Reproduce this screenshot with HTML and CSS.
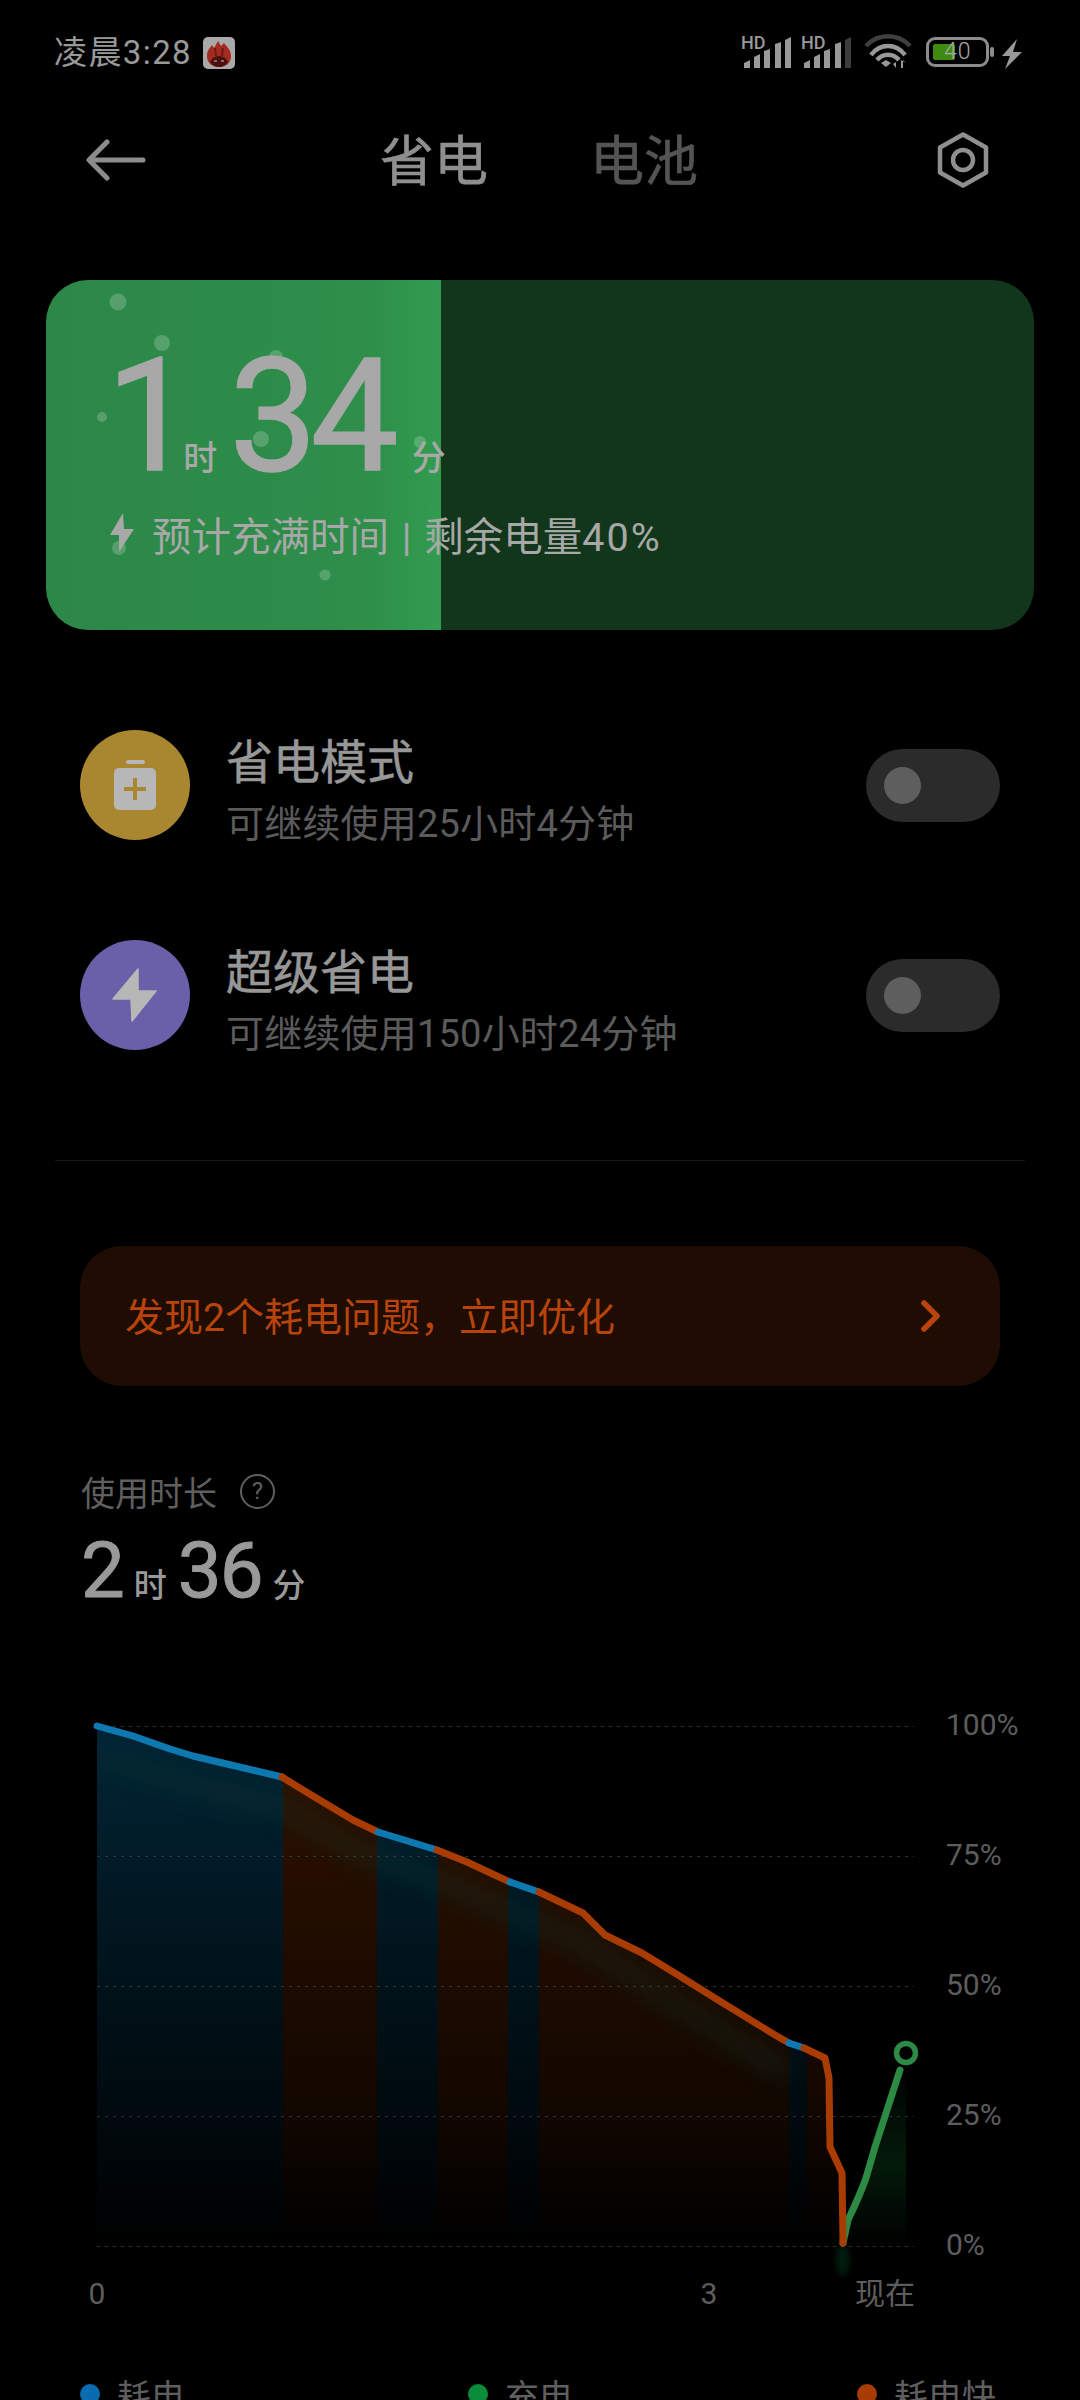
FILE: index.html
```html
<!DOCTYPE html>
<html lang="zh-CN">
<head>
    <meta charset="UTF-8">
    <meta name="viewport" content="width=device-width, initial-scale=1.0">
    <title>省电</title>
    <link rel="stylesheet" href="styles.css">
</head>
<body>
    <div class="status-bar">
        <div class="status-left">
            <span class="status-time">凌晨3:28</span>
            <svg class="app-badge" width="32" height="32" viewBox="0 0 32 32">
                <rect width="32" height="32" rx="5" fill="#a9a9a9"/>
                <path d="M4 19 C4 13 7 11 9 8 L11 11 L15 4 L18 9 L21 6 C24 10 28 13 28 19 C28 26 23 30 16 30 C9 30 4 26 4 19Z" fill="#a52a21"/>
                <path d="M7 25 C9 21 12 19 16 19 C20 19 23 21 25 25 C23 28 20 30 16 30 C12 30 9 28 7 25Z" fill="#4b100d"/>
                <path d="M12 11 L13 19 M20 11 L19 19" stroke="#6e1a14" stroke-width="2"/>
                <path d="M11 24 H14 M18 24 H21" stroke="#c9c9c9" stroke-width="1.2"/>
            </svg>
        </div>
        <div class="status-right">
            <div class="signal">
                <span class="signal-hd">HD</span>
                <svg width="50" height="32" viewBox="0 0 50 32">
                    <path d="M1 26 L7 23 V31 H1Z M11 20 L17 17 V31 H11Z M21 14 L27 12 V31 H21Z M32 7 L38 5 V31 H32Z M42 3 L48 0 V31 H42Z" fill="#999"/>
                </svg>
            </div>
            <div class="signal">
                <span class="signal-hd">HD</span>
                <svg width="50" height="32" viewBox="0 0 50 32">
                    <path d="M1 26 L7 23 V31 H1Z M11 20 L17 17 V31 H11Z M21 14 L27 12 V31 H21Z M32 7 L38 5 V31 H32Z" fill="#999"/>
                    <path d="M42 3 L48 0 V31 H42Z" fill="#3c3c3c"/>
                </svg>
            </div>
            <svg class="wifi" width="48" height="34" viewBox="0 0 48 34">
                <path d="M2 12 C14 -1 34 -1 46 12" fill="none" stroke="#3f3f3f" stroke-width="4.5"/>
                <path d="M7 21 C16 9 32 9 41 21" fill="none" stroke="#999" stroke-width="4.5"/>
                <path d="M13 26 C19 19 29 19 35 26" fill="none" stroke="#999" stroke-width="4.5"/>
                <path d="M17 29 L22 26 L27 29 L22 33Z" fill="#999"/>
                <path d="M32 34 V28 L29 30 Z M39 26 V34 H37 V26 L42 29 Z" fill="#999"/>
            </svg>
            <div class="battery">
                <div class="battery-body">
                    <div class="battery-level"></div>
                    <span class="battery-text">40</span>
                </div>
                <div class="battery-nub"></div>
            </div>
            <svg class="bolt-small" width="20" height="30" viewBox="0 0 20 30">
                <path d="M15 0 L0 17 H8 L3 30 L20 13 H11Z" fill="#999"/>
            </svg>
        </div>
    </div>

    <div class="nav">
        <svg class="nav-back" width="60" height="42" viewBox="0 0 60 42">
            <path d="M57 21 H4 M21 3 L3 21 L21 39" fill="none" stroke="#8c8c8c" stroke-width="5" stroke-linecap="round" stroke-linejoin="round"/>
        </svg>
        <div class="nav-tabs">
            <span class="nav-tab active">省电</span>
            <span class="nav-tab">电池</span>
        </div>
        <svg class="nav-settings" width="52" height="56" viewBox="0 0 52 56">
            <path d="M26 2.5 L49 15.5 V40.5 L26 53.5 L3 40.5 V15.5Z" fill="none" stroke="#8f8f8f" stroke-width="4.5" stroke-linejoin="round"/>
            <circle cx="26" cy="28" r="10" fill="none" stroke="#8f8f8f" stroke-width="4.5"/>
        </svg>
    </div>

    <div class="charge-card">
        <svg class="charge-bubbles" width="988" height="350" viewBox="46 280 988 350">
            <circle cx="118" cy="302" r="8.5"/>
            <circle cx="162" cy="343" r="8"/>
            <circle cx="102" cy="417" r="5"/>
            <circle cx="276" cy="357" r="7"/>
            <circle cx="261" cy="439" r="8"/>
            <circle cx="420" cy="442" r="6"/>
            <circle cx="119" cy="548" r="7"/>
            <circle cx="325" cy="575" r="5.5"/>
        </svg>
        <div class="charge-time">
            <span class="charge-num charge-num-one">1</span>
            <span class="charge-unit">时</span>
            <span class="charge-num">34</span>
            <span class="charge-unit">分</span>
        </div>
        <div class="charge-info">
            <svg width="26" height="40" viewBox="0 0 26 40">
                <path d="M13 0 L0 22 H9 L9 39 L24 16 H14Z" fill="#a8a8a8"/>
            </svg>
            <span>预计充满时间 | 剩余电量<span class="charge-percent">40%</span></span>
        </div>
    </div>

    <div class="mode-row">
        <div class="mode-icon mode-icon-saver">
            <svg width="110" height="110" viewBox="0 0 110 110">
                <rect x="46" y="30" width="19" height="4" rx="2" fill="#b7b7b7"/>
                <rect x="34" y="38" width="42" height="42" rx="5" fill="#b7b7b7"/>
                <path d="M44 59 H66 M55 48 V70" stroke="#a98630" stroke-width="4"/>
            </svg>
        </div>
        <div class="mode-text">
            <div class="mode-title">省电模式</div>
            <div class="mode-desc">可继续使用25小时4分钟</div>
        </div>
        <div class="toggle"><div class="toggle-knob"></div></div>
    </div>

    <div class="mode-row">
        <div class="mode-icon mode-icon-super">
            <svg width="110" height="110" viewBox="0 0 110 110">
                <path d="M58 29 L33 59 H51 L52 81 L76 51 H58Z" fill="#b7b7b7" stroke="#b7b7b7" stroke-width="1.5" stroke-linejoin="round"/>
            </svg>
        </div>
        <div class="mode-text">
            <div class="mode-title">超级省电</div>
            <div class="mode-desc">可继续使用150小时24分钟</div>
        </div>
        <div class="toggle"><div class="toggle-knob"></div></div>
    </div>

    <div class="divider"></div>

    <div class="alert-banner">
        <span>发现2个耗电问题，立即优化</span>
        <svg class="alert-arrow" width="22" height="32" viewBox="0 0 22 32">
            <path d="M4 3 L17 16 L4 29" fill="none" stroke="#b8440c" stroke-width="5.5" stroke-linecap="round" stroke-linejoin="round"/>
        </svg>
    </div>

    <div class="usage-head">
        <span>使用时长</span>
        <span class="help-icon">?</span>
    </div>
    <div class="usage-total">
        <span class="usage-num">2</span>
        <span class="usage-unit">时</span>
        <span class="usage-num">36</span>
        <span class="usage-unit">分</span>
    </div>

    <svg class="chart" width="1080" height="670" viewBox="0 1680 1080 670">
        <defs>
            <linearGradient id="fade-blue" gradientUnits="userSpaceOnUse" x1="0" y1="1726" x2="0" y2="2240">
                <stop offset="0" stop-color="#022536"/>
                <stop offset="0.5" stop-color="#01121a"/>
                <stop offset="0.75" stop-color="#000a0f"/>
                <stop offset="1" stop-color="#000"/>
            </linearGradient>
            <linearGradient id="fade-orange" gradientUnits="userSpaceOnUse" x1="0" y1="1726" x2="0" y2="2240">
                <stop offset="0" stop-color="#301200"/>
                <stop offset="0.5" stop-color="#1d0b00"/>
                <stop offset="0.75" stop-color="#120700"/>
                <stop offset="1" stop-color="#000"/>
            </linearGradient>
            <linearGradient id="fade-green" gradientUnits="userSpaceOnUse" x1="0" y1="2060" x2="0" y2="2246">
                <stop offset="0" stop-color="#000"/>
                <stop offset="0.55" stop-color="#031a0a"/>
                <stop offset="1" stop-color="#000"/>
            </linearGradient>
            <clipPath id="under-line">
                <path d="M97 1726 L133 1736 L170 1749 L193 1756 L282 1777 L303 1790 L353 1820 L378 1832 L437 1850 L467 1862 L510 1882 L539 1892 L583 1913 L605 1935 L642 1953 L678 1975 L718 2000 L775 2035 L789 2043 L804 2048 L825 2058 L829 2078 L830 2147 L842 2173 L843 2260 L97 2260Z"/>
            </clipPath>
            <filter id="haze" x="-10%" y="-30%" width="120%" height="160%">
                <feGaussianBlur stdDeviation="11"/>
            </filter>
            <filter id="soft" x="-100%" y="-50%" width="300%" height="200%">
                <feGaussianBlur stdDeviation="3"/>
            </filter>
        </defs>

        <g clip-path="url(#under-line)">
            <rect x="97" y="1720" width="186" height="530" fill="url(#fade-blue)"/>
            <rect x="283" y="1720" width="94" height="530" fill="url(#fade-orange)"/>
            <rect x="377" y="1720" width="61" height="530" fill="url(#fade-blue)"/>
            <rect x="438" y="1720" width="70" height="530" fill="url(#fade-orange)"/>
            <rect x="508" y="1720" width="31" height="530" fill="url(#fade-blue)"/>
            <rect x="539" y="1720" width="250" height="530" fill="url(#fade-orange)"/>
            <rect x="789" y="1720" width="18" height="530" fill="url(#fade-blue)"/>
            <rect x="807" y="1720" width="36" height="530" fill="url(#fade-orange)"/>
            <path d="M97 1756 L193 1786 L282 1807 L353 1850 L437 1880 L510 1912 L583 1943 L642 1983 L718 2030 L789 2073" fill="none" stroke="#0c3a30" stroke-width="22" opacity="0.3" filter="url(#haze)"/>
        </g>
        <path d="M846 2240 L848 2220 L866 2178 L875 2147 L902 2063 L906 2063 V2246 L846 2246Z" fill="url(#fade-green)"/>
        <ellipse cx="843" cy="2260" rx="7" ry="16" fill="#031a0a" filter="url(#soft)"/>

        <g class="chart-grid">
            <line x1="97" y1="1726.5" x2="914" y2="1726.5"/>
            <line x1="97" y1="1856.5" x2="914" y2="1856.5"/>
            <line x1="97" y1="1986.5" x2="914" y2="1986.5"/>
            <line x1="97" y1="2116.5" x2="914" y2="2116.5"/>
            <line x1="97" y1="2246.5" x2="914" y2="2246.5"/>
        </g>

        <g class="chart-line">
            <path stroke="#0e78b0" d="M97 1726 L133 1736 L170 1749 L193 1756 L282 1777"/>
            <path stroke="#a83c02" d="M282 1777 L303 1790 L353 1820 L378 1832"/>
            <path stroke="#0e78b0" d="M378 1832 L437 1850"/>
            <path stroke="#a83c02" d="M437 1850 L467 1862 L510 1882"/>
            <path stroke="#0e78b0" d="M510 1882 L539 1892"/>
            <path stroke="#a83c02" d="M539 1892 L583 1913 L605 1935 L642 1953 L678 1975 L718 2000 L775 2035 L789 2043"/>
            <path stroke="#0e78b0" d="M789 2043 L804 2048"/>
            <path stroke="#2c8a45" d="M843 2243 L848 2220 Q860 2195 866 2178 L875 2147 L900 2070"/>
            <path stroke="#a83c02" d="M804 2048 L825 2058 L829 2078 L830 2147 L842 2173 L843 2243"/>
        </g>
        <circle cx="906" cy="2053" r="9.5" fill="#000" stroke="#2c8a45" stroke-width="5.5"/>

        <g class="chart-label">
            <text x="946" y="1735">100%</text>
            <text x="946" y="1865">75%</text>
            <text x="946" y="1995">50%</text>
            <text x="946" y="2125">25%</text>
            <text x="946" y="2255">0%</text>
            <text x="97" y="2304" text-anchor="middle">0</text>
            <text x="709" y="2304" text-anchor="middle">3</text>
            <text x="855" y="2304">现在</text>
        </g>
    </svg>

    <div class="legend">
        <div class="legend-item"><span class="legend-dot dot-blue"></span>耗电</div>
        <div class="legend-item"><span class="legend-dot dot-green"></span>充电</div>
        <div class="legend-item"><span class="legend-dot dot-orange"></span>耗电快</div>
    </div>
</body>
</html>
```

FILE: styles.css
```css
* {
    box-sizing: border-box;
}

html, body {
    margin: 0;
    padding: 0;
}

body {
    width: 1080px;
    height: 2400px;
    overflow: hidden;
    background: #000;
    color: #979797;
    font-family: Roboto, "Noto Sans CJK SC", sans-serif;
}

svg {
    display: block;
    flex-shrink: 0;
}

/* status bar */
.status-bar {
    height: 104px;
    padding: 34px 58px 0 54px;
    display: flex;
    justify-content: space-between;
    align-items: flex-start;
}

.status-left {
    display: flex;
    align-items: center;
    gap: 11px;
}

.status-time {
    font-size: 33px;
    line-height: 38px;
    letter-spacing: 1.4px;
    color: #999;
}

.status-right {
    display: flex;
    align-items: flex-start;
}

.signal {
    position: relative;
    width: 50px;
    height: 34px;
    margin-right: 10px;
    margin-left: 0;
}

.signal svg {
    position: absolute;
    left: 2px;
    top: 3px;
}

.signal-hd {
    position: absolute;
    left: 0;
    top: 1px;
    font-size: 18px;
    line-height: 15px;
    font-weight: 500;
    color: #999;
    background: #000;
    z-index: 1;
}

.wifi {
    margin: 0 14px 0 3px;
}

.battery {
    display: flex;
    align-items: center;
    margin-right: 8px;
    margin-top: 3px;
}

.battery-body {
    position: relative;
    width: 63px;
    height: 30px;
    border: 3px solid #8c8c8c;
    border-radius: 9px;
}

.battery-level {
    width: 22px;
    height: 16px;
    margin: 4px 0 0 4px;
    background: #3f8a10;
    border-radius: 2px;
}

.battery-text {
    position: absolute;
    left: 15px;
    top: -1px;
    font-size: 23px;
    line-height: 26px;
    font-weight: 300;
    color: #aaa;
    letter-spacing: 1px;
}

.battery-nub {
    width: 4px;
    height: 10px;
    margin-left: 1px;
    background: #8c8c8c;
    border-radius: 2px;
}

.bolt-small {
    margin-top: 5px;
}

/* nav */
.nav {
    position: relative;
    height: 112px;
    padding: 0 91px 0 86px;
    display: flex;
    align-items: center;
    justify-content: space-between;
}

.nav-tabs {
    display: flex;
    gap: 102px;
    padding-top: 5px;
    margin-left: 234px;
    margin-right: auto;
}

.nav-tab {
    font-size: 54px;
    line-height: 60px;
    -webkit-text-stroke: 0.6px;
    color: #545454;
}

.nav-tab.active {
    color: #8f8f8f;
}

/* charge card */
.charge-card {
    position: relative;
    width: 988px;
    height: 350px;
    margin: 64px 46px 0;
    padding: 58px 0 0 60px;
    border-radius: 42px;
    overflow: hidden;
    background: linear-gradient(90deg, #2c8748 0, #2e8e4a 320px, #319c4f 395px, #12361b 395px);
}

.charge-bubbles {
    position: absolute;
    left: 0;
    top: 0;
}

.charge-bubbles circle {
    fill: rgba(255, 255, 255, 0.2);
}

.charge-time {
    position: relative;
    display: flex;
    align-items: baseline;
    height: 157px;
    color: #a8a8a8;
}

.charge-num {
    font-size: 157px;
    line-height: 157px;
    -webkit-text-stroke: 1.5px;
    letter-spacing: -7px;
}

.charge-num-one {
    margin-right: -24px;
}

.charge-unit {
    font-size: 34px;
    font-weight: 500;
    margin: 0 12px 0 20px;
}

.charge-info {
    position: relative;
    display: flex;
    align-items: center;
    gap: 16px;
    margin: 13px 0 0 4px;
    height: 50px;
    font-size: 39.5px;
    word-spacing: 3px;
    color: #a8a8a8;
}

.charge-percent {
    letter-spacing: 2px;
}

/* mode rows */
.mode-row {
    display: flex;
    align-items: center;
    height: 110px;
    margin: 100px 80px 0;
}

.mode-icon {
    width: 110px;
    height: 110px;
    border-radius: 50%;
}

.mode-icon-saver {
    background: #a98630;
}

.mode-icon-super {
    background: #6a60a9;
}

.mode-text {
    flex: 1;
    margin-left: 36px;
    padding-top: 11px;
}

.mode-title {
    font-size: 47px;
    line-height: 62px;
    -webkit-text-stroke: 0.5px;
    margin-bottom: 5px;
    color: #979797;
}

.mode-desc {
    font-size: 38px;
    line-height: 50px;
    letter-spacing: 0.2px;
    color: #5b5b5b;
}

.toggle {
    width: 134px;
    height: 73px;
    padding: 18px;
    border-radius: 37px;
    background: #2b2b2b;
}

.toggle-knob {
    width: 37px;
    height: 37px;
    border-radius: 50%;
    background: #5e5e5e;
}

.divider {
    height: 1px;
    margin: 110px 55px 0;
    background: #161616;
}

/* banner */
.alert-banner {
    display: flex;
    align-items: center;
    justify-content: space-between;
    height: 140px;
    margin: 85px 80px 0;
    padding: 0 58px 4px 45px;
    border-radius: 42px;
    background: #1f0d03;
    font-size: 39px;
    color: #b8440c;
}

.alert-arrow {
    margin-top: 4px;
}

/* usage summary */
.usage-head {
    display: flex;
    align-items: center;
    gap: 23px;
    height: 44px;
    margin: 83px 0 0 81px;
    font-size: 34px;
    color: #5f5f5f;
}

.help-icon {
    width: 35px;
    height: 35px;
    border: 2px solid #5f5f5f;
    border-radius: 50%;
    font-size: 24px;
    line-height: 30px;
    text-align: center;
}

.usage-total {
    display: flex;
    align-items: baseline;
    height: 78px;
    margin: 19px 0 0 81px;
    color: #999;
}

.usage-num {
    font-size: 78px;
    line-height: 78px;
    -webkit-text-stroke: 1px;
    letter-spacing: -2px;
}

.usage-unit {
    font-size: 33px;
    font-weight: 500;
    margin: 0 11px 0 11px;
}

/* chart */
.chart {
    margin-top: 70px;
}

.chart-grid line {
    stroke: #333;
    stroke-width: 1;
    stroke-dasharray: 3 5;
}

.chart-line path {
    fill: none;
    stroke-width: 7;
    stroke-linecap: round;
    stroke-linejoin: round;
}

.chart-label text {
    font-size: 30px;
    fill: #5d5d5d;
}

/* legend */
.legend {
    display: grid;
    grid-template-columns: 388px 389px 1fr;
    margin: 19px 0 0 80px;
}

.legend-item {
    display: flex;
    align-items: center;
    gap: 17px;
    height: 50px;
    font-size: 34px;
    color: #5f5f5f;
}

.legend-dot {
    width: 20px;
    height: 20px;
    border-radius: 50%;
}

.dot-blue {
    background: #0a6cb0;
}

.dot-green {
    background: #0a8c38;
}

.dot-orange {
    background: #a83c02;
}
```
